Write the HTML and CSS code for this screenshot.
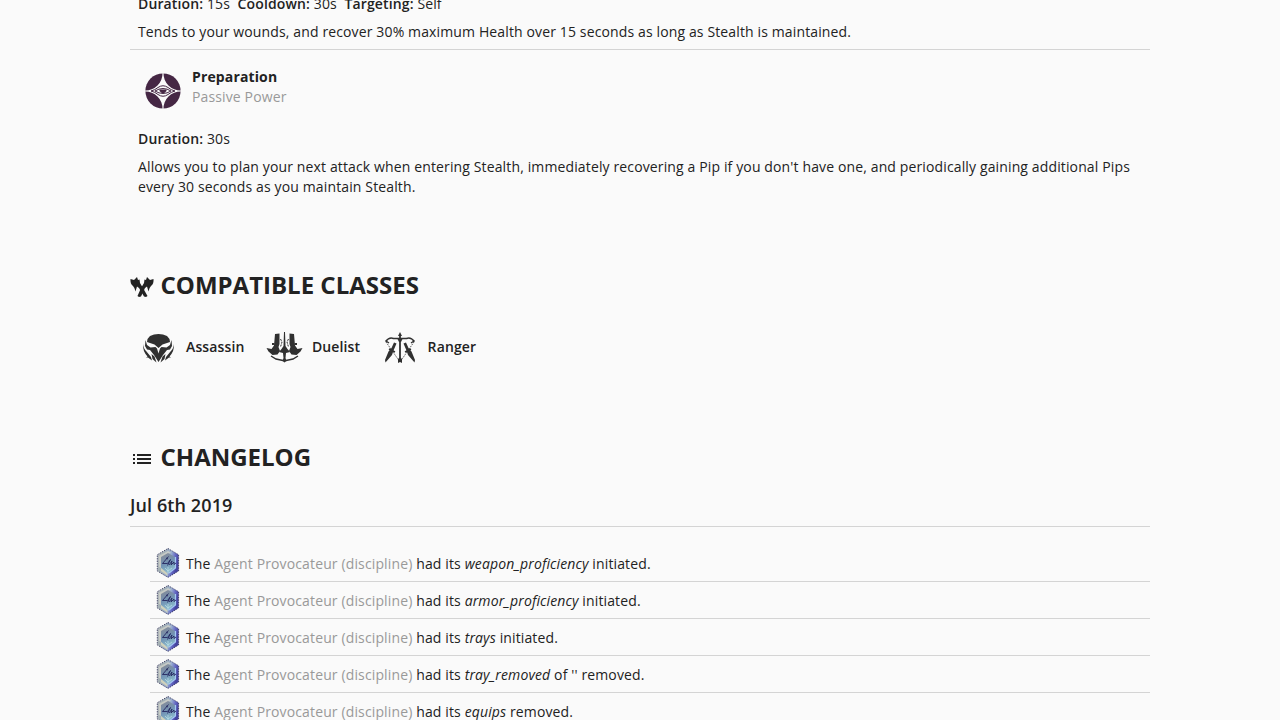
FILE: index.html
```html
<!DOCTYPE html>
<html lang="en">
<head>
<meta charset="utf-8">
<title>Agent Provocateur</title>
<link rel="stylesheet" href="styles.css">
</head>
<body>
<svg class="defs" aria-hidden="true">
  <defs>
    <linearGradient id="gem-fill" x1="0" y1="0" x2="1" y2="0.3">
      <stop offset="0" stop-color="#b9bcc0"/>
      <stop offset="0.3" stop-color="#a3b0b4"/>
      <stop offset="0.65" stop-color="#9aaed0"/>
      <stop offset="0.85" stop-color="#6468c4"/>
      <stop offset="1" stop-color="#4544a0"/>
    </linearGradient>
    <linearGradient id="gem-core" x1="0.3" y1="0" x2="0.6" y2="1">
      <stop offset="0" stop-color="#858b98"/>
      <stop offset="0.5" stop-color="#7192b4"/>
      <stop offset="1" stop-color="#8fc3cf"/>
    </linearGradient>
    <symbol id="gem" viewBox="0 0 24 30">
      <path d="M12 .5 22.6 6.7V23L12 29.4 1.3 23V6.7Z" fill="url(#gem-fill)"/>
      <path d="M12 .5 22.6 6.7V23L12 29.4 1.3 23V6.7Z" fill="none" stroke="#38385f" stroke-width=".9" stroke-dasharray="1.3 1.2"/>
      <path d="M3 8 12 3l3 1.500L5 10.500V20l-2-1Z" fill="#d0d1c8" opacity=".8"/>
      <path d="M12 5 19 9v11l-7 5-7-5V9Z" fill="url(#gem-core)"/>
      <path d="M19.500 9v11L13 25" fill="none" stroke="#a5c8f4" stroke-width="1.200"/>
      <path d="M5 20l6 5 1 3-7-5Z" fill="#d1d3bb"/>
      <path d="M12 19v7M9 20l3 3 4-3" fill="none" stroke="#b9dce4" stroke-width=".8"/>
      <path d="M12.500 8.500 6.500 15.500h5l3-4-3 6M10 10l2 1M13 17l3-4-1 4 3-3v2.500l2-1.500" fill="none" stroke="#252760" stroke-width=".9"/>
    </symbol>
  </defs>
</svg>
<main class="page">
  <section class="power power-first">
    <p class="stats"><b>Duration:</b> 15s&nbsp; <b>Cooldown:</b> 30s&nbsp; <b>Targeting:</b> Self</p>
    <p>Tends to your wounds, and recover 30% maximum Health over 15 seconds as long as Stealth is maintained.</p>
  </section>
  <section class="power">
    <div class="power-head">
      <svg class="power-icon" viewBox="0 0 36 36">
        <circle cx="18" cy="18" r="17.6" fill="#452744"/>
        <path d="M17.500 0h1A17 17 0 0 0 36 17.500v1A17 17 0 0 0 18.500 36h-1A17 17 0 0 0 0 18.500v-1A17 17 0 0 0 17.500 0Z" fill="#fafafa"/>
        <path d="M6 18q4-1 7-3.500 5-3.500 10 0 3 2.500 7 3.500-4 1-7 3.500-5 3.500-10 0-3-2.500-7-3.500Z" fill="#fafafa" stroke="#452744" stroke-width="1"/>
        <path d="M10 18q8-5 16 0-8 5-16 0Z" fill="#fafafa" stroke="#452744" stroke-width="1"/>
        <path d="M14.500 16.500h7v1.500q-3.500 4.500-7 0Z" fill="#452744"/>
      </svg>
      <div><div class="power-name">Preparation</div><div class="muted">Passive Power</div></div>
    </div>
    <p class="stats"><b>Duration:</b> 30s</p>
    <p>Allows you to plan your next attack when entering Stealth, immediately recovering a Pip if you don't have one, and periodically gaining additional Pips every 30 seconds as you maintain Stealth.</p>
  </section>

  <h2 class="title title-classes">
    <svg class="title-icon" viewBox="0 0 24 24" fill="#222">
      <path d="M.5 4l3.500 1 3-3 1 3 1.500-.5.500 3.500 3 5 4.500 8-1.500 1-2-.5-5-8.500-2-1.500-1.500 5Q5 13 3 11 0 9 .5 4Z"/>
      <path d="M23.500 4l-3.500 1-3-3-1 3-1.500-.5-.5 3.500-3 5-3.500 8 1.500 1 2-.5 4-8.500 2-1.500 1.500 5Q19 13 21 11 24 9 23.500 4Z"/>
    </svg>
    COMPATIBLE CLASSES
  </h2>
  <div class="classes">
    <div class="class-item">
      <svg class="class-icon" viewBox="0 0 40 38" fill="#303030">
        <path d="M9.500 11l2.500-3 4-1.500q4.500-1 9 0l4 1.500 2.500 3 .5 3-7.500 2.500-4 3.500-4-3.500L9 14Z"/>
        <path d="M7.500 12l1.500 5 3.500 2.500 5-.5 1.500 1.500 1.500 5 1.500-5 1.500-1.500 5 .5 3.500-2.500 1.500-5 .5 6-2 3.500-3 .5-4 5-4.500 7-4.500-7-4-5-3-.5-2-3.500Z"/>
        <path d="M5 16q.5 5 3.500 7.500l4.500 5.500 1 3.500-4-3H8l1.500-1Q4.500 23 5 16ZM36 16q-.5 5-3.500 7.500L28 29l-1 3.500 4-3h2l-1.500-1Q36.500 23 36 16Z"/>
        <path d="M13.500 26l3 2.500 2 6-4-3.500ZM27.500 26l-3 2.500-2 6 4-3.500Z"/>
      </svg>
      <span>Assassin</span>
    </div>
    <div class="class-item">
      <svg class="class-icon" viewBox="0 0 40 38" fill="#303030">
        <path d="M11 6l4.500-.5V16l-1 3 1.500 4-2.500 3.500-5 .5-4-3.500L2.500 20l5 1 2.500-3.500Z"/>
        <path d="M30 6l-4.500-.5V16l1 3-1.500 4 2.500 3.500 5 .5 4-3.500L38.500 20l-5 1-2.500-3.500Z"/>
        <path d="M20 4h1L21.500 18l2 3 2.500 3-4 1-.5 5 1 3-2 1.500L18.500 33l1-3-.5-5-4-1 2.500-3 2-3Z"/>
        <path d="M7 28l5 3 7 1.500M34 28l-5 3-7 1.500" fill="none" stroke="#303030" stroke-width="1.400"/>
        <path d="M16.500 11l1.500 3-1.500 5M24.500 11l-1.500 3 1.500 5" fill="none" stroke="#303030" stroke-width="1" stroke-dasharray="2 1"/>
        <path d="M8 16h2.500M30.500 16h2.500" stroke="#303030" stroke-width="2"/>
      </svg>
      <span>Duelist</span>
    </div>
    <div class="class-item">
      <svg class="class-icon" viewBox="0 0 40 38">
        <g fill="none" stroke="#303030">
          <path d="M20 6v27" stroke-width="1.800"/>
          <path d="M5.500 13.500q4-5 8-3l6.500 0 6.500 0q4-2 8 3" stroke-width="1.500"/>
          <path d="M6 14l14 20 14-20" stroke-width=".8" stroke-dasharray="1.500 1"/>
          <path d="M9 15l-3-2M31 15l3-2M9 21l6 3M31 21l-6 3" stroke-width="1.400"/>
        </g>
        <path d="M20 4l2 4h-4ZM18 31l2-2 2 2v4l-2-1-2 1ZM17 10h6l-2 4h-2ZM14 14.500l2.500 1-3 7-1.500 4.500L5.500 34.500 5 32l3.500-8.500L11.500 20ZM26 14.500l-2.500 1 3 7 1.500 4.500 6.500 7.500.5-2.500-3.500-8.500L28.500 20Z" fill="#303030"/>
      </svg>
      <span>Ranger</span>
    </div>
  </div>

  <h2 class="title title-log">
    <svg class="title-icon" viewBox="0 0 24 24" fill="#222" shape-rendering="crispEdges"><path d="M3 7h2v2H3zm4 0h14v2H7zM3 11h2v2H3zm4 0h14v2H7zM3 15h2v2H3zm4 0h14v2H7z"/></svg>
    CHANGELOG
  </h2>
  <h3 class="date">Jul 6th 2019</h3>
  <ul class="log">
    <li><svg class="gem"><use href="#gem"/></svg><span>The <a>Agent Provocateur (discipline)</a> had its <i>weapon_proficiency</i> initiated.</span></li>
    <li><svg class="gem"><use href="#gem"/></svg><span>The <a>Agent Provocateur (discipline)</a> had its <i>armor_proficiency</i> initiated.</span></li>
    <li><svg class="gem"><use href="#gem"/></svg><span>The <a>Agent Provocateur (discipline)</a> had its <i>trays</i> initiated.</span></li>
    <li><svg class="gem"><use href="#gem"/></svg><span>The <a>Agent Provocateur (discipline)</a> had its <i>tray_removed</i> of '' removed.</span></li>
    <li><svg class="gem"><use href="#gem"/></svg><span>The <a>Agent Provocateur (discipline)</a> had its <i>equips</i> removed.</span></li>
  </ul>
</main>
</body>
</html>
```
FILE: styles.css
```css
* { box-sizing: border-box; }
html, body { height: 100%; margin: 0; overflow: hidden; }
body {
  background: #fafafa;
  color: #222;
  font: 14px/20px "Open Sans", "Noto Sans", sans-serif;
  letter-spacing: 0.00938em;
}
p, h2, h3, ul { margin: 0; padding: 0; }
.defs { display: block; width: 0; height: 0; }
.page { width: 1020px; margin: -6px auto 0; }
.power { padding: 17px 8px 0; }
.power-first { padding: 0 8px 7px; border-bottom: 1px solid #d4d4d4; }
.stats { margin-bottom: 8px; }
b { font-weight: 600; }
.power-head { display: flex; height: 62px; }
.power-icon { width: 36px; height: 36px; margin: 6px 11px 0 7px; }
.power-name { font-weight: 700; }
.muted { color: #999; }
.title {
  display: flex;
  align-items: center;
  gap: 6.5px;
  font-size: 24px;
  line-height: 36px;
  font-weight: 700;
  letter-spacing: 0;
}
.title-icon { width: 24px; height: 24px; margin-top: 4px; }
.title-classes { margin-top: 70px; }
.classes { display: flex; height: 38px; margin-top: 25px; }
.class-item { display: flex; align-items: center; font-weight: 600; }
.class-item + .class-item { margin-left: 19.4px; }
.class-icon { width: 40px; height: 38px; margin: 0 8px; }
.class-item + .class-item .class-icon { margin-left: 0; }
.title-log { margin-top: 73px; }
.date {
  padding: 17px 0 8px;
  border-bottom: 1px solid #d4d4d4;
  font-size: 18px;
  line-height: 26px;
  font-weight: 600;
  letter-spacing: 0.1px;
}
.log { list-style: none; margin: 18px 0 0 20px; }
.log li {
  display: flex;
  align-items: center;
  height: 37px;
  padding-left: 6px;
  border-bottom: 1px solid #d4d4d4;
}
.log span { padding-top: 2px; }
.log a { color: #999; }
.gem { width: 24px; height: 30px; margin-right: 6px; }
```
